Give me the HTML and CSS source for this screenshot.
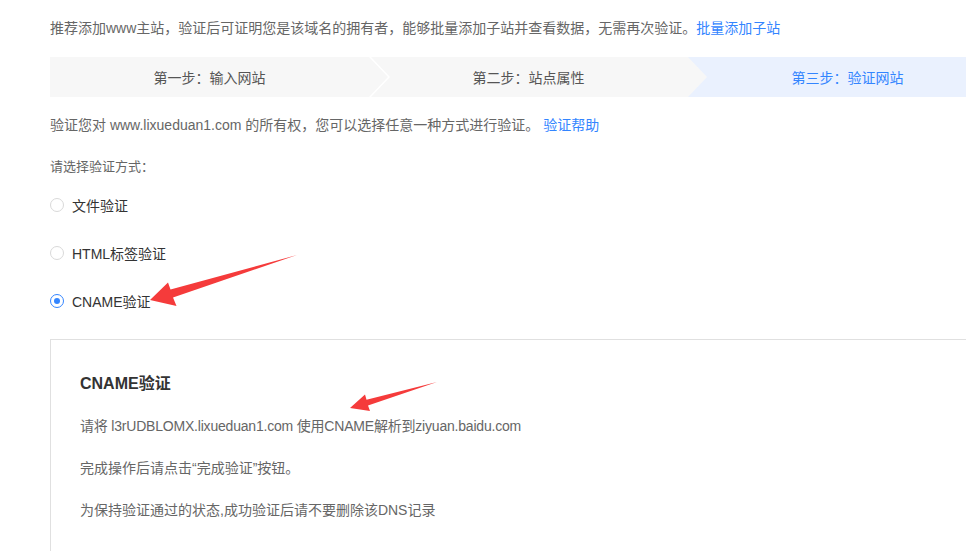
FILE: index.html
```html
<!DOCTYPE html>
<html lang="zh-CN">
<head>
<meta charset="utf-8">
<title>验证网站</title>
<link rel="stylesheet" href="styles.css">
</head>
<body>
<div class="page">
  <p class="intro">推荐添加www主站，验证后可证明您是该域名的拥有者，能够批量添加子站并查看数据，无需再次验证。<a class="link" href="#">批量添加子站</a></p>

  <div class="steps">
    <div class="step step-first">第一步：输入网站</div>
    <div class="step">第二步：站点属性</div>
    <div class="step step-active">第三步：验证网站</div>
  </div>

  <p class="verify">验证您对 www.lixueduan1.com 的所有权，您可以选择任意一种方式进行验证。 <a class="link" href="#">验证帮助</a></p>

  <p class="choose">请选择验证方式：</p>

  <div class="options">
    <label class="option"><span class="radio"></span>文件验证</label>
    <label class="option"><span class="radio"></span>HTML标签验证</label>
    <label class="option"><span class="radio checked"></span>CNAME验证</label>
  </div>

  <div class="panel">
    <h3 class="panel-title">CNAME验证</h3>
    <p class="panel-line panel-line-tight">请将 l3rUDBLOMX.lixueduan1.com 使用CNAME解析到ziyuan.baidu.com</p>
    <p class="panel-line">完成操作后请点击“完成验证”按钮。</p>
    <p class="panel-line">为保持验证通过的状态,成功验证后请不要删除该DNS记录</p>
  </div>
</div>

<svg class="annotations" width="966" height="551" viewBox="0 0 966 551" aria-hidden="true">
  <polygon fill="#f53b3b" points="150,300 168,282.5 170.5,289.5 297,255 173,297.5 176.5,306"/>
  <polygon fill="#f53b3b" points="350,408 365,394.5 366.5,399.8 437,382 368,405.5 370,411"/>
</svg>
</body>
</html>
```
FILE: styles.css
```css
html, body {
  margin: 0;
  padding: 0;
  overflow: hidden;
  background: #fff;
}

body {
  width: 966px;
  height: 551px;
  position: relative;
  font-family: "Liberation Sans", "Noto Sans CJK SC", sans-serif;
  color: #666;
}

.page {
  box-sizing: border-box;
  width: 966px;
  height: 551px;
  overflow: hidden;
  padding: 18px 0 0 50px;
}

p { margin: 0; }

.intro {
  font-size: 14px;
  line-height: 20px;
  white-space: nowrap;
}

.link {
  color: #3385ff;
  text-decoration: none;
}

.steps {
  margin-top: 19px;
  display: flex;
  width: 957px;
  height: 40px;
  background: #f7f7f7;
}

.step {
  position: relative;
  width: 319px;
  flex: none;
  display: flex;
  align-items: center;
  justify-content: center;
  font-size: 14px;
  color: #555;
}

.step-first::after {
  content: "";
  position: absolute;
  top: 0;
  right: -21px;
  width: 21px;
  height: 40px;
  background: #fff;
  clip-path: polygon(0 0, 2px 0, 21px 50%, 2px 100%, 0 100%, 19px 50%);
}

.step-active {
  background: #eaf1fe;
  color: #3385ff;
  clip-path: polygon(0 0, 100% 0, 100% 100%, 0 100%, 19px 50%);
}

.verify {
  margin-top: 18px;
  font-size: 14px;
  line-height: 20px;
  white-space: nowrap;
}

.choose {
  margin-top: 22px;
  font-size: 13px;
  line-height: 20px;
}

.options {
  margin-top: 18px;
  display: flex;
  flex-direction: column;
  gap: 28px;
}

.option {
  display: flex;
  align-items: center;
  height: 20px;
  font-size: 14px;
  color: #333;
}

.radio {
  box-sizing: border-box;
  width: 14px;
  height: 14px;
  border: 1px solid #d9d9d9;
  border-radius: 50%;
  margin-right: 8px;
  display: flex;
  align-items: center;
  justify-content: center;
}

.radio.checked {
  border-color: #3385ff;
}

.radio.checked::after {
  content: "";
  width: 6px;
  height: 6px;
  border-radius: 50%;
  background: #3385ff;
}

.panel {
  margin-top: 28px;
  border: 1px solid #e0e0e0;
  padding: 33px 0 60px 29px;
  width: 940px;
}

.panel-title {
  margin: 0;
  font-size: 16px;
  line-height: 22px;
  font-weight: bold;
  color: #333;
}

.panel-line {
  margin-top: 21px;
  font-size: 14px;
  line-height: 20px;
  color: #666;
  white-space: nowrap;
}

.panel-line-tight {
  letter-spacing: -0.2px;
}

.panel-line + .panel-line {
  margin-top: 22px;
}

.annotations {
  position: absolute;
  left: 0;
  top: 0;
  pointer-events: none;
}
```
